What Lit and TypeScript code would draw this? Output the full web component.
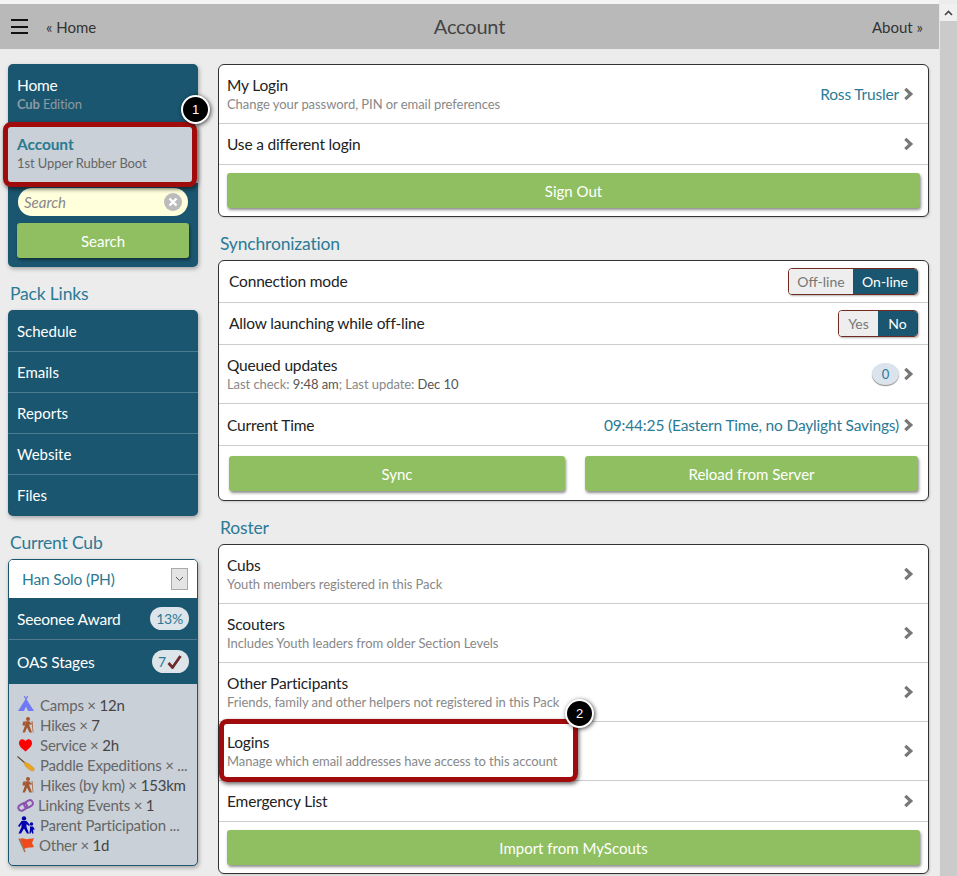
import { LitElement, html, css, svg } from "lit";
import { customElement } from "lit/decorators.js";

const chev = html`<svg class="chev" width="11" height="14" viewBox="0 0 11 14"><path d="M2.3 1.8 L7.8 7 L2.3 12.2" fill="none" stroke="#777" stroke-width="3.2"/></svg>`;

const hiker = svg`<g fill="#a5582f"><circle cx="11" cy="3" r="2"/><path d="M8.5 5.2 L12.5 5.2 L12.5 10 L15 16.5 H12.5 L10 11.5 L8 16.5 H5.5 L8 9.5 Z"/><path d="M6 5.8 L8.5 5.2 L8 9.5 L5.5 9.5 Z"/><path d="M12 5.5 L15 7.8 L14.2 9 L11.5 7.2 Z"/><path d="M14.6 5 L15.4 5 L16.4 16.5 H15.8 Z"/></g>`;
const icons: Record<string, unknown> = {
  camp: svg`<path d="M7.3 0 L9 3.2 L10.7 0" fill="none" stroke="#6f78f5" stroke-width="1.2"/><path d="M9 2.5 L17 15 H1 Z" fill="#6f78f5"/><path d="M9 10.5 L11 15 H7 Z" fill="#c9d0d8"/>`,
  hike: hiker,
  heart: svg`<path d="M8.5 15.5 C3.5 11.5 2 9.5 2 7 C2 4.8 3.6 3.2 5.3 3.2 C6.8 3.2 7.9 4 8.5 5.2 C9.1 4 10.2 3.2 11.7 3.2 C13.4 3.2 15 4.8 15 7 C15 9.5 13.5 11.5 8.5 15.5 Z" fill="#f00"/>`,
  paddle: svg`<path d="M0.5 0.5 L8 7" stroke="#5c4a2a" stroke-width="1.1"/><path d="M7 6.5 C10 6 14 9 17 12.5 C18 14.5 16 15.5 14 14.5 C11 13 7.5 10 7 6.5 Z" fill="#eaa51f" stroke="#c9851a" stroke-width=".5"/>`,
  link: svg`<g fill="none" stroke="#8a4fb0" stroke-width="1.9"><rect x="1.2" y="8" width="9" height="6" rx="3" transform="rotate(-30 5.7 11)"/><rect x="7" y="5" width="9" height="6" rx="3" transform="rotate(-30 11.5 8)"/></g>`,
  parent: svg`<g fill="#0000b0"><circle cx="7" cy="2.4" r="2.2"/><path d="M4.5 5 L9.5 5 L13 9 L12 10 L9.5 8 L9.5 11 L12 17.5 L10 17.5 L7 12.5 L4 17.5 L1.5 17.5 L4.5 11 L4.5 8 L2.5 11 L1 10 Z"/><circle cx="14.5" cy="8" r="1.7"/><path d="M13 10.5 L16 10.5 L17.8 13.5 L16.8 14 L16 13 L16.5 17.5 L15 17.5 L14.5 15 L13.5 17.5 L12.3 17.5 L13 13.5 Z"/></g>`,
  flag: svg`<path d="M3 3 C6 1 8 4 11 3 C13 2.5 15 3 17 2 L15 7 L17 11 C14 12 11 11 8 12.5 L7 13 Z" fill="#ee4a1c"/><path d="M2 2.5 L8 16" stroke="#a07050" stroke-width="1.5"/>`,
};
const icon = (n: string, w = 18) => html`<svg class="ic" width="${w}" height="18" viewBox="0 0 18 18">${icons[n]}</svg>`;

@customElement("app-root")
export class AppRoot extends LitElement {
  static styles = css`
    :host { display: block; width: 957px; height: 876px; overflow: hidden; position: relative; background: #ececec;
      font-family: Lato, "Open Sans", sans-serif; font-size: 15px; color: #222; }
    * { box-sizing: border-box; }
    .page { display: grid; grid-template-columns: 939px 18px; height: 876px; }
    .content { padding-top: 4px; background: linear-gradient(#f4f4f4 4px, #ececec 4px); }
    .header { height: 45px; background: #b9b9b9; display: flex; align-items: center; padding: 0 16px 0 11px; color: #333; position: relative; }
    .burger { width: 17px; height: 15px; border-top: 2px solid #111; border-bottom: 2px solid #111; position: relative; margin-right: 18px; }
    .burger::after { content: ""; position: absolute; left: 0; right: 0; top: 4.5px; height: 2px; background: #111; }
    .header h1 { position: absolute; left: 0; right: 0; margin: 0; text-align: center; font-size: 20px; letter-spacing: -0.2px; font-weight: 400; color: #444; top: 9px; line-height: 27px; }
    .header .r { margin-left: auto; }
    .body { display: flex; gap: 20px; padding: 15px 0 0 8px; }
    .side { width: 190px; flex: none; }
    .main { width: 711px; flex: none; }
    .panel { background: #1a566f; border-radius: 5px; box-shadow: 1px 2px 4px rgba(0,0,0,.3); overflow: hidden; color: #fff; }
    .h2 { color: #2b7a96; font-size: 17.5px; letter-spacing: -0.17px; line-height: 24px; margin: 15px 0 4px; padding-left: 2px; }
    .nav-top { padding: 11px 9px; height: 60px; line-height: 20px; font-size: 15.5px; letter-spacing: -0.17px; }
    .nav-top small { display: block; font-size: 13px; color: #8a9aa4; line-height: 18px; }
    .nav-top small b { color: #8a9aa4; }
    .nav-acc { height: 59px; background: #c9d0d8; padding: 10px 9px; color: #2b7a8e; font-weight: 700; font-size: 15.5px; letter-spacing: -0.1px; line-height: 20px; }
    .nav-acc small { display: block; font-weight: 400; font-size: 13px; color: #666; line-height: 18px; }
    .search { margin: 5px 10px 0; height: 28px; border-radius: 14px; background: #ffffdc; display: flex; align-items: center; padding: 0 6px; color: #888; font-style: italic; font-size: 15px; justify-content: space-between; }
    .x { width: 18px; height: 18px; border-radius: 50%; background: #bbb; }
    .x svg { display: block; }
    .btn { display: flex; align-items: center; justify-content: center; background: #8fbf60; color: #fff; border-radius: 3px; box-shadow: 1px 2px 3px rgba(0,0,0,.45); height: 35px; font-size: 15px; }
    .side-btn { margin: 7px 9px 9px; }
    .links { padding-bottom: 1px; }
    .links div { height: 41px; display: flex; align-items: center; padding-left: 9px; border-top: 1px solid #4b7b8e; font-size: 15px; }
    .links div:first-child { border-top: 0; }
    .cub { border: 1px solid #1a566f; background: #c9d0d8; }
    .sel { height: 38px; background: #fff; color: #2b7a96; font-size: 15.5px; letter-spacing: -0.17px; display: flex; align-items: center; justify-content: space-between; padding: 0 9px 0 13px; }
    .selbtn { width: 17px; height: 22px; border: 1px solid #aaa; background: #e4e4e4; display: flex; align-items: center; justify-content: center; }
    .cubrow { background: #1a566f; color: #fff; display: flex; align-items: center; justify-content: space-between; padding: 0 8px; font-size: 15.5px; letter-spacing: -0.17px; }
    .cubrow.a { height: 42px; border-bottom: 1px solid #4f7a8c; }
    .cubrow.b { height: 44px; padding-bottom: 1px; }
    .pill { background: #dde4ea; color: #2b7a96; border-radius: 12px; height: 23px; display: flex; align-items: center; padding: 0 6px; font-size: 14px; letter-spacing: -0.2px; }
    .pill.chk { padding: 0 7px 0 6px; gap: 1px; }
    .list { padding: 11px 8px 10px 8px; font-size: 15px; letter-spacing: -0.2px; color: #666; height: 181px; }
    .li { height: 20px; display: flex; align-items: center; white-space: nowrap; gap: 5px; }
    .li.g3 { gap: 3px; }
    .li.g4 { gap: 4px; }
    .li b { font-weight: 400; color: #444; }
    .ic { flex: none; }
    .card { background: #fff; border: 1px solid #333; border-radius: 6px; box-shadow: 1px 1px 2px rgba(0,0,0,.15); overflow: hidden; }
    .row { display: flex; align-items: center; justify-content: space-between; padding: 0 14px 0 8px; border-bottom: 1px solid #ccc; }
    .row.t { height: 59px; }
    .row.s { height: 41px; }
    .row.m { height: 42px; }
    .row.c { height: 42px; padding: 0 10px; }
    .row.c .ttl { padding-bottom: 2px; }
    .ttl { font-size: 15.5px; letter-spacing: -0.17px; line-height: 20px; color: #222; }
    .sub { font-size: 13px; letter-spacing: -0.06px; line-height: 18px; color: #888; }
    .sub b { font-weight: 400; color: #555; }
    .rt { display: flex; align-items: center; gap: 4px; color: #2b7a96; font-size: 15.5px; letter-spacing: -0.17px; }
    .chev { display: block; }
    .btnwrap { padding: 8px; }
    .btnrow { display: flex; gap: 20px; padding: 10px 10px 8px; height: 54px; }
    .btnrow .btn:first-child { width: 336px; }
    .btnrow .btn:last-child { flex: 1; }
    .seg { display: flex; border: 1px solid #702a20; border-radius: 4px; overflow: hidden; height: 27px; box-shadow: 1px 1px 2px rgba(0,0,0,.3); font-size: 14px; }
    .seg span { display: flex; align-items: center; justify-content: center; background: #eee; color: #777; }
    .seg span.on { background: #1a566f; color: #fff; }
    .seg .w64 { width: 64px; }
    .seg .w39 { width: 39px; }
    .zero { width: 27px; height: 22px; border-radius: 50%; background: #dbe4ec; color: #2b7a96; display: flex; align-items: center; justify-content: center; font-size: 13px; box-shadow: 0 1px 1px #888; }
    .scroll { background: #cbcbcb; border-left: 1px solid #e8e8e8; margin-top: 4px; }
    .up { height: 17px; background: #f0f0f0; display: flex; align-items: center; justify-content: center; }
    .ann { position: absolute; border: 5px solid #a00c0c; border-radius: 8px; box-shadow: 1px 2px 4px rgba(0,0,0,.6); }
    .dot { position: absolute; width: 29px; height: 29px; border-radius: 50%; background: #000; border: 2px solid #fff; color: #fff; display: flex; align-items: center; justify-content: center; font-size: 13px; box-shadow: 1px 1px 4px rgba(0,0,0,.7); font-family: "Liberation Sans", sans-serif; }
    .a1 { left: 3px; top: 122px; width: 194px; height: 65px; }
    .d1 { left: 181px; top: 95px; }
    .a2 { left: 219px; top: 719px; width: 359px; height: 63px; }
    .d2 { left: 565px; top: 699px; }
  `;

  private tr(t: string, s: unknown) {
    return html`<div class="row t"><div><div class="ttl">${t}</div><div class="sub">${s}</div></div>${chev}</div>`;
  }

  render() {
    return html`
      <div class="page">
        <div class="content">
          <div class="header">
            <div class="burger"></div><span>« Home</span>
            <h1>Account</h1><span class="r">About »</span>
          </div>
          <div class="body">
            <div class="side">
              <div class="panel">
                <div class="nav-top">Home<small><b>Cub</b> Edition</small></div>
                <div class="nav-acc">Account<small>1st Upper Rubber Boot</small></div>
                <div class="search"><span>Search</span><span class="x"><svg width="18" height="18" viewBox="0 0 18 18"><path d="M5.5 5.5 L12.5 12.5 M12.5 5.5 L5.5 12.5" stroke="#fff" stroke-width="2.4"/></svg></span></div>
                <div class="btn side-btn">Search</div>
              </div>
              <div class="h2">Pack Links</div>
              <div class="panel links">
                <div>Schedule</div><div>Emails</div><div>Reports</div><div>Website</div><div>Files</div>
              </div>
              <div class="h2">Current Cub</div>
              <div class="panel cub">
                <div class="sel"><span>Han Solo (PH)</span><span class="selbtn"><svg width="9" height="6" viewBox="0 0 9 6"><path d="M1 1 L4.5 4.5 L8 1" fill="none" stroke="#555"/></svg></span></div>
                <div class="cubrow a"><span>Seeonee Award</span><span class="pill">13%</span></div>
                <div class="cubrow b"><span>OAS Stages</span><span class="pill chk">7<svg width="15" height="14" viewBox="0 0 15 14"><path d="M1.5 8 L5.5 12.5 L13.5 1" fill="none" stroke="#6a2c2c" stroke-width="2.8"/></svg></span></div>
                <div class="list">
                  <div class="li">${icon("camp")}<span>Camps × <b>12n</b></span></div>
                  <div class="li">${icon("hike")}<span>Hikes × <b>7</b></span></div>
                  <div class="li">${icon("heart")}<span>Service × <b>2h</b></span></div>
                  <div class="li">${icon("paddle")}<span>Paddle Expeditions × ...</span></div>
                  <div class="li">${icon("hike")}<span>Hikes (by km) × <b>153km</b></span></div>
                  <div class="li g3">${icon("link")}<span>Linking Events × <b>1</b></span></div>
                  <div class="li">${icon("parent")}<span>Parent Participation ...</span></div>
                  <div class="li g4">${icon("flag")}<span>Other × <b>1d</b></span></div>
                </div>
              </div>
            </div>
            <div class="main">
              <div class="card">
                <div class="row t"><div><div class="ttl">My Login</div><div class="sub">Change your password, PIN or email preferences</div></div><div class="rt">Ross Trusler ${chev}</div></div>
                <div class="row s"><div class="ttl">Use a different login</div>${chev}</div>
                <div class="btnwrap"><div class="btn">Sign Out</div></div>
              </div>
              <div class="h2">Synchronization</div>
              <div class="card">
                <div class="row c"><div class="ttl">Connection mode</div><div class="seg"><span class="w64">Off-line</span><span class="on w64">On-line</span></div></div>
                <div class="row c"><div class="ttl">Allow launching while off-line</div><div class="seg"><span class="w39">Yes</span><span class="on w39">No</span></div></div>
                <div class="row t"><div><div class="ttl">Queued updates</div><div class="sub">Last check: <b>9:48 am</b>; Last update: <b>Dec 10</b></div></div><div class="rt"><span class="zero">0</span>${chev}</div></div>
                <div class="row m"><div class="ttl">Current Time</div><div class="rt">09:44:25 (Eastern Time, no Daylight Savings) ${chev}</div></div>
                <div class="btnrow"><div class="btn">Sync</div><div class="btn">Reload from Server</div></div>
              </div>
              <div class="h2">Roster</div>
              <div class="card">
                ${this.tr("Cubs", "Youth members registered in this Pack")}
                ${this.tr("Scouters", "Includes Youth leaders from older Section Levels")}
                ${this.tr("Other Participants", "Friends, family and other helpers not registered in this Pack")}
                ${this.tr("Logins", "Manage which email addresses have access to this account")}
                <div class="row s"><div class="ttl">Emergency List</div>${chev}</div>
                <div class="btnwrap"><div class="btn">Import from MyScouts</div></div>
              </div>
            </div>
          </div>
        </div>
        <div class="scroll"><div class="up"><svg width="9" height="6" viewBox="0 0 9 6"><path d="M1 5 L4.5 1.5 L8 5" fill="none" stroke="#444" stroke-width="1.6"/></svg></div></div>
      </div>
      <div class="ann a1"></div><div class="dot d1">1</div>
      <div class="ann a2"></div><div class="dot d2">2</div>
    `;
  }
}
